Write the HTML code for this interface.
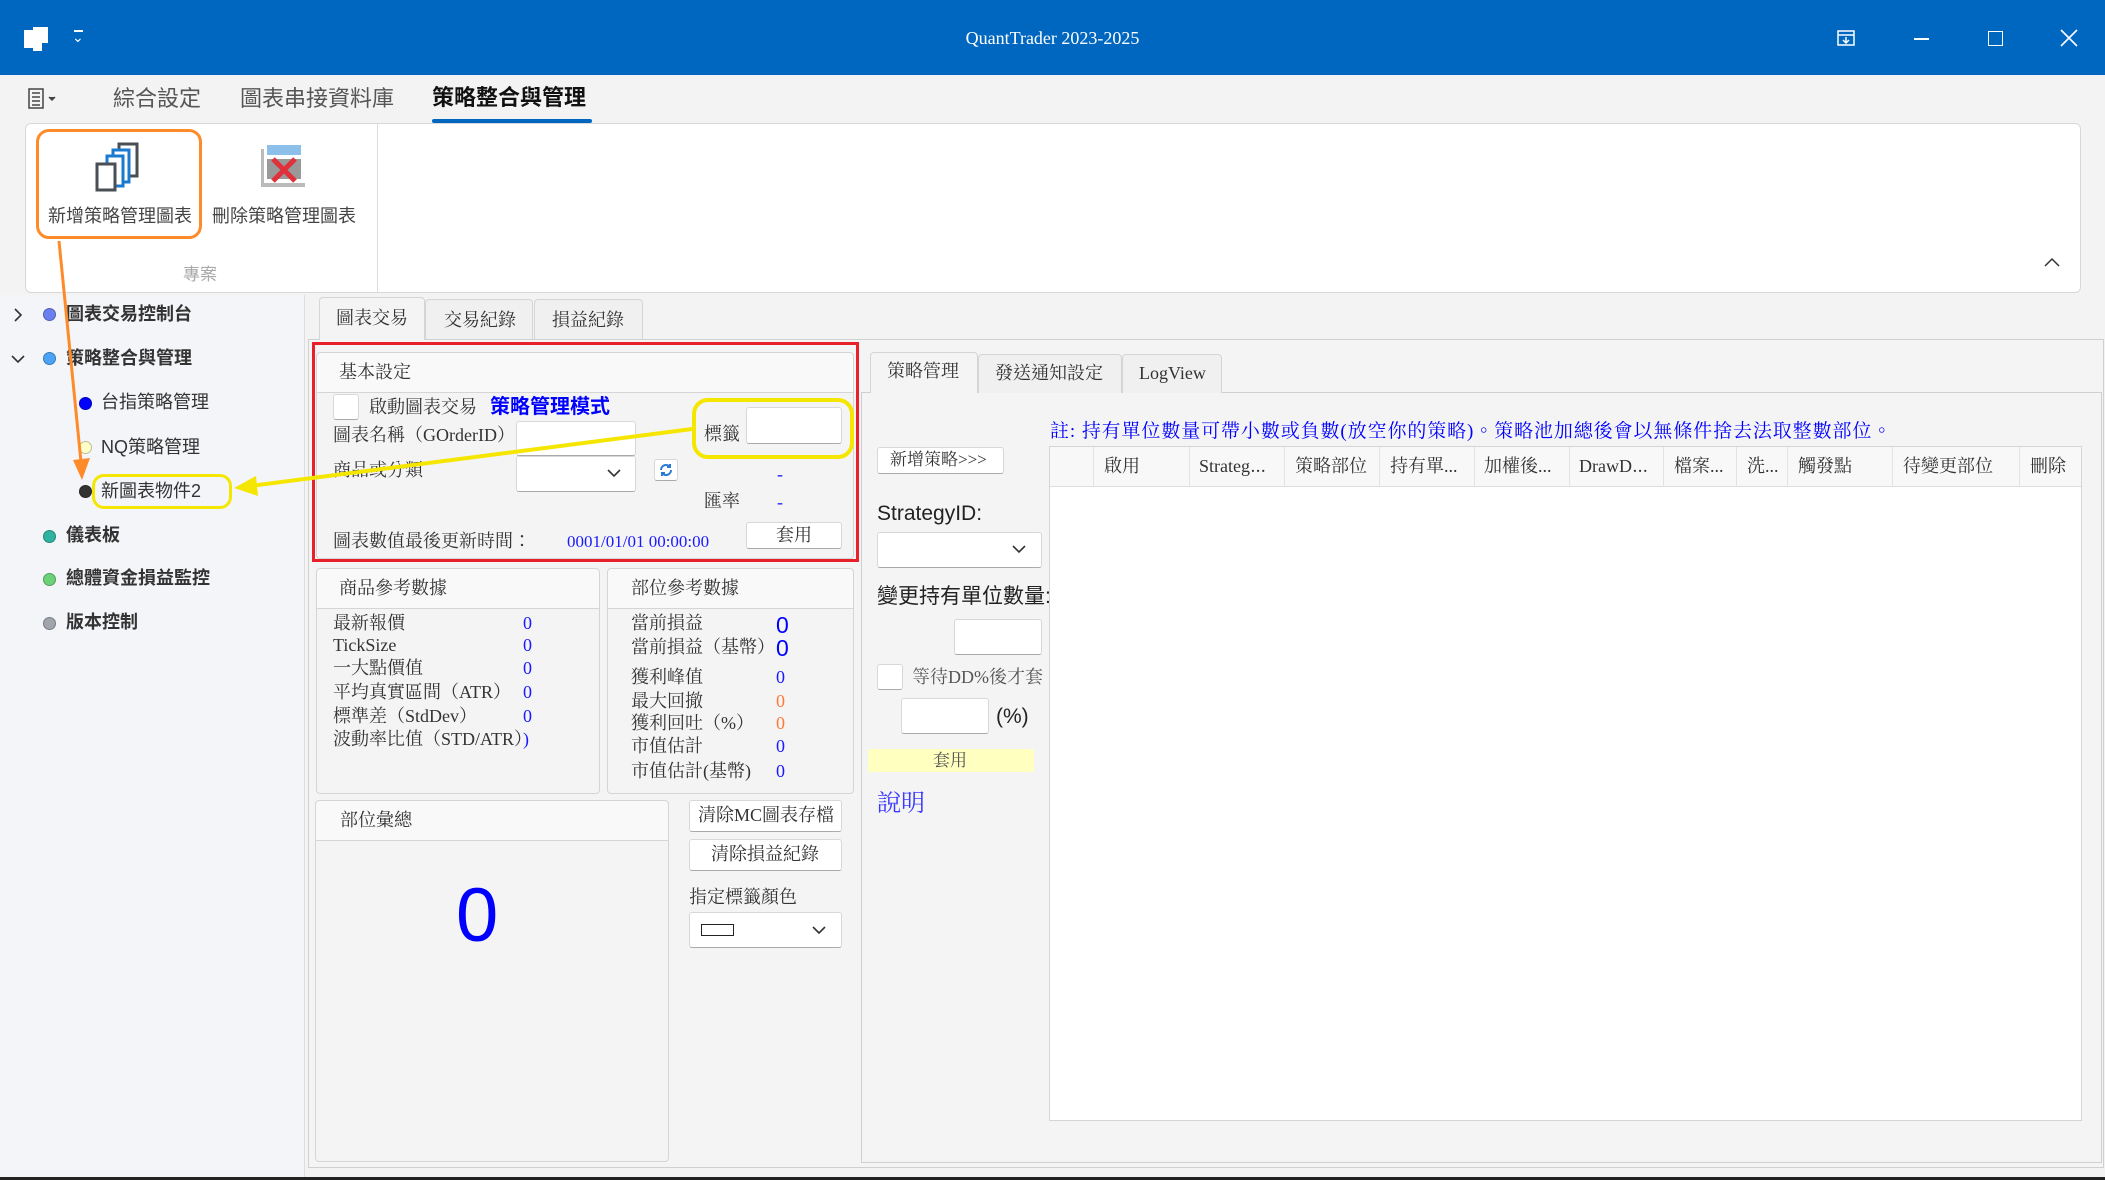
<!DOCTYPE html>
<html><head><meta charset="utf-8">
<style>
*{box-sizing:border-box;margin:0;padding:0}
body{width:2105px;height:1180px;position:relative;overflow:hidden;background:#f3f3f3;font-family:"Liberation Serif","Noto Serif CJK TC",serif;color:#333}
.a{position:absolute}
.t{position:absolute;white-space:nowrap;line-height:1}
.s{font-family:"Liberation Sans","Noto Sans CJK TC",sans-serif}
.box{position:absolute;background:#fff;border:1px solid #d8d8d8;border-radius:3px;border-bottom-color:#aaa}
.grp{position:absolute;border:1px solid #d5d5d5;border-radius:4px;background:#f4f4f4}
.gh{position:absolute;left:0;right:0;top:0;background:#f9f9f9;border-bottom:1px solid #d5d5d5;border-radius:4px 4px 0 0}
.tab{position:absolute;background:#f0f0f0;border:1px solid #d5d5d5;border-bottom:none;border-radius:4px 4px 0 0}
.tab.sel{background:#f4f4f4}
.dot{position:absolute;width:13px;height:13px;border-radius:50%;border:1px solid rgba(0,0,0,.25)}
.v{color:#1a1aff}
.o{color:#ff7a3a}
.hc{position:absolute;top:0;height:40px;border-right:1px solid #e3e3e3}
</style></head><body>

<!-- title bar -->
<div class="a" style="left:0;top:0;width:2105px;height:75px;background:#0067c0"></div>
<div class="a" style="left:24px;top:30px;width:12px;height:18px;background:#fff"></div>
<div class="a" style="left:33px;top:27px;width:15px;height:16px;background:#fff"></div>
<div class="a" style="left:33px;top:43px;width:9px;height:8px;background:#fff"></div>
<div class="t s" style="left:72px;top:30px;color:#fff;font-size:14px">⌄</div>
<div class="a" style="left:74px;top:30px;width:9px;height:1.5px;background:#fff"></div>
<div class="t" style="left:0;width:2105px;text-align:center;top:29px;color:#fff;font-size:18px">QuantTrader 2023-2025</div>
<svg class="a" style="left:1835px;top:28px" width="22" height="20" viewBox="0 0 22 20" fill="none" stroke="#fff" stroke-width="1.5"><rect x="3" y="3" width="16" height="14"/><line x1="3" y1="7" x2="19" y2="7"/><path d="M11 9v6M8 12l3 3 3-3"/></svg>
<div class="a" style="left:1914px;top:38px;width:15px;height:1.5px;background:#fff"></div>
<div class="a" style="left:1988px;top:31px;width:15px;height:15px;border:1.5px solid #fff"></div>
<svg class="a" style="left:2060px;top:29px" width="18" height="18" stroke="#fff" stroke-width="1.6"><path d="M1 1L17 17M17 1L1 17"/></svg>

<!-- menu row -->
<svg class="a" style="left:28px;top:88px" width="32" height="22" fill="none" stroke="#444" stroke-width="1.5"><rect x="1" y="1" width="14" height="19"/><path d="M4 5h8M4 9h8M4 13h8M4 17h8"/><path d="M21 9l3 3 3-3" fill="#444"/></svg>
<div class="t s" style="left:113px;top:88px;font-size:22px;color:#555">綜合設定</div>
<div class="t s" style="left:240px;top:88px;font-size:22px;color:#555">圖表串接資料庫</div>
<div class="t s" style="left:432px;top:87px;font-size:22px;color:#111;font-weight:bold">策略整合與管理</div>
<div class="a" style="left:432px;top:119px;width:160px;height:4px;background:#0067c0;border-radius:2px"></div>

<!-- ribbon -->
<div class="a" style="left:25px;top:123px;width:2056px;height:170px;background:#fff;border:1px solid #d8d8d8;border-radius:6px"></div>
<div class="a" style="left:377px;top:124px;width:1px;height:168px;background:#ddd"></div>
<div class="a" style="left:36px;top:129px;width:166px;height:110px;border:3px solid #ff8a2a;border-radius:13px"></div>
<svg class="a" style="left:95px;top:142px" width="46" height="50" fill="#fff" stroke-width="3">
<rect x="24" y="2" width="18" height="32" stroke="#4a4f55"/>
<rect x="18" y="8" width="16" height="32" stroke="#1a7ad0"/>
<rect x="12" y="14" width="16" height="30" stroke="#1a7ad0"/>
<rect x="2" y="22" width="18" height="26" stroke="#4a4f55"/>
</svg>
<div class="t s" style="left:48px;top:207px;font-size:18px;color:#444">新增策略管理圖表</div>
<svg class="a" style="left:261px;top:145px" width="44" height="44">
<rect x="6" y="0" width="34" height="10" fill="#8cc0ea"/>
<rect x="0" y="4" width="3" height="38" fill="#bbb"/>
<rect x="0" y="38" width="44" height="4" fill="#bbb"/>
<rect x="6" y="14" width="34" height="20" fill="#999"/>
<path d="M12 14l22 22M34 14L12 36" stroke="#e0303a" stroke-width="5"/>
</svg>
<div class="t s" style="left:212px;top:207px;font-size:18px;color:#444">刪除策略管理圖表</div>
<div class="t s" style="left:183px;top:266px;font-size:17px;color:#aaa">專案</div>
<svg class="a" style="left:2044px;top:257px" width="16" height="10" fill="none" stroke="#333" stroke-width="1.5"><path d="M1 9l7-7 7 7"/></svg>

<!-- left tree -->
<div class="a" style="left:0;top:295px;width:305px;height:882px;background:#f4f5f9;border-right:1px solid #ddd"></div>
<svg class="a" style="left:13px;top:307px" width="10" height="16" fill="none" stroke="#333" stroke-width="1.6"><path d="M2 2l6 6-6 6"/></svg>
<svg class="a" style="left:10px;top:354px" width="16" height="10" fill="none" stroke="#333" stroke-width="1.6"><path d="M2 2l6 6 6-6"/></svg>
<div class="dot" style="left:43px;top:308px;background:#6b7ff0"></div>
<div class="t s" style="left:66px;top:305px;font-size:18px;font-weight:bold;color:#333">圖表交易控制台</div>
<div class="dot" style="left:43px;top:352px;background:#4aa3f5"></div>
<div class="t s" style="left:66px;top:349px;font-size:18px;font-weight:bold;color:#333">策略整合與管理</div>
<div class="dot" style="left:79px;top:397px;background:#0000ff"></div>
<div class="t s" style="left:101px;top:393px;font-size:18px;color:#333">台指策略管理</div>
<div class="dot" style="left:79px;top:441px;background:#ffffc8"></div>
<div class="t s" style="left:101px;top:438px;font-size:18px;color:#333">NQ策略管理</div>
<div class="dot" style="left:79px;top:485px;background:#333"></div>
<div class="t s" style="left:101px;top:482px;font-size:18px;color:#333">新圖表物件2</div>
<div class="dot" style="left:43px;top:530px;background:#2fb3a0"></div>
<div class="t s" style="left:66px;top:526px;font-size:18px;font-weight:bold;color:#333">儀表板</div>
<div class="dot" style="left:43px;top:573px;background:#6cd27a"></div>
<div class="t s" style="left:66px;top:569px;font-size:18px;font-weight:bold;color:#333">總體資金損益監控</div>
<div class="dot" style="left:43px;top:617px;background:#a0a4ad"></div>
<div class="t s" style="left:66px;top:613px;font-size:18px;font-weight:bold;color:#333">版本控制</div>

<!-- main tabs -->
<div class="a" style="left:308px;top:339px;width:1796px;height:829px;border:1px solid #d0d0d0;background:#f4f4f4"></div>
<div class="tab sel" style="left:319px;top:297px;width:106px;height:43px"></div>
<div class="tab" style="left:425px;top:299px;width:108px;height:40px"></div>
<div class="tab" style="left:534px;top:299px;width:109px;height:40px"></div>
<div class="t" style="left:336px;top:309px;font-size:18px">圖表交易</div>
<div class="t" style="left:444px;top:311px;font-size:18px">交易紀錄</div>
<div class="t" style="left:552px;top:311px;font-size:18px">損益紀錄</div>

<!-- 基本設定 -->
<div class="grp" style="left:316px;top:352px;width:538px;height:207px"><div class="gh" style="height:40px"></div></div>
<div class="t" style="left:339px;top:363px;font-size:18px">基本設定</div>
<div class="box" style="left:333px;top:394px;width:26px;height:26px"></div>
<div class="t" style="left:369px;top:398px;font-size:18px">啟動圖表交易</div>
<div class="t s" style="left:490px;top:397px;font-size:20px;font-weight:bold;color:#0000ff">策略管理模式</div>
<div class="t" style="left:333px;top:426px;font-size:18px">圖表名稱（GOrderID）</div>
<div class="box" style="left:516px;top:421px;width:120px;height:35px"></div>
<div class="t" style="left:333px;top:461px;font-size:18px">商品或分類</div>
<div class="box" style="left:516px;top:456px;width:120px;height:36px"></div>
<svg class="a" style="left:607px;top:469px" width="14" height="9" fill="none" stroke="#333" stroke-width="1.6"><path d="M1 1l6 6 6-6"/></svg>
<div class="box" style="left:654px;top:459px;width:24px;height:22px"></div>
<svg class="a" style="left:658px;top:462px" width="16" height="16" fill="none" stroke="#2a7ad6" stroke-width="2"><path d="M3 8a5 5 0 0 1 9-3M13 8a5 5 0 0 1-9 3"/><path d="M12 2v3h-3M4 14v-3h3"/></svg>
<div class="t" style="left:704px;top:425px;font-size:18px">標籤</div>
<div class="box" style="left:746px;top:407px;width:96px;height:37px"></div>
<div class="t v" style="left:777px;top:465px;font-size:18px">-</div>
<div class="t" style="left:704px;top:492px;font-size:18px">匯率</div>
<div class="t v" style="left:777px;top:493px;font-size:18px">-</div>
<div class="box" style="left:746px;top:522px;width:96px;height:27px"></div>
<div class="t" style="left:776px;top:526px;font-size:18px">套用</div>
<div class="t" style="left:333px;top:532px;font-size:18px">圖表數值最後更新時間：</div>
<div class="t v" style="left:567px;top:533px;font-size:17px">0001/01/01 00:00:00</div>
<div class="a" style="left:312px;top:342px;width:547px;height:220px;border:3px solid #e8202a"></div>

<!-- 商品參考數據 -->
<div class="grp" style="left:316px;top:568px;width:284px;height:226px"><div class="gh" style="height:40px"></div></div>
<div class="t" style="left:339px;top:579px;font-size:18px">商品參考數據</div>
<div class="t" style="left:333px;top:614px;font-size:18px">最新報價</div>
<div class="t" style="left:333px;top:636px;font-size:18px">TickSize</div>
<div class="t" style="left:333px;top:659px;font-size:18px">一大點價值</div>
<div class="t" style="left:333px;top:683px;font-size:18px">平均真實區間（ATR）</div>
<div class="t" style="left:333px;top:707px;font-size:18px">標準差（StdDev）</div>
<div class="t" style="left:333px;top:730px;font-size:18px">波動率比值（STD/ATR）<span class="v">)</span></div>
<div class="t v" style="left:523px;top:614px;font-size:18px">0</div>
<div class="t v" style="left:523px;top:636px;font-size:18px">0</div>
<div class="t v" style="left:523px;top:659px;font-size:18px">0</div>
<div class="t v" style="left:523px;top:683px;font-size:18px">0</div>
<div class="t v" style="left:523px;top:707px;font-size:18px">0</div>

<!-- 部位參考數據 -->
<div class="grp" style="left:607px;top:568px;width:247px;height:226px"><div class="gh" style="height:40px"></div></div>
<div class="t" style="left:631px;top:579px;font-size:18px">部位參考數據</div>
<div class="t" style="left:631px;top:614px;font-size:18px">當前損益</div>
<div class="t" style="left:631px;top:638px;font-size:18px">當前損益（基幣）</div>
<div class="t" style="left:631px;top:668px;font-size:18px">獲利峰值</div>
<div class="t" style="left:631px;top:692px;font-size:18px">最大回撤</div>
<div class="t" style="left:631px;top:714px;font-size:18px">獲利回吐（%）</div>
<div class="t" style="left:631px;top:737px;font-size:18px">市值估計</div>
<div class="t" style="left:631px;top:762px;font-size:18px">市值估計(基幣)</div>
<div class="t s" style="left:776px;top:614px;font-size:23px;color:#0000ff">0</div>
<div class="t s" style="left:776px;top:637px;font-size:23px;color:#0000ff">0</div>
<div class="t v" style="left:776px;top:668px;font-size:18px">0</div>
<div class="t o" style="left:776px;top:692px;font-size:18px">0</div>
<div class="t o" style="left:776px;top:714px;font-size:18px">0</div>
<div class="t v" style="left:776px;top:737px;font-size:18px">0</div>
<div class="t v" style="left:776px;top:762px;font-size:18px">0</div>

<!-- 部位彙總 -->
<div class="grp" style="left:315px;top:800px;width:354px;height:362px"><div class="gh" style="height:40px"></div></div>
<div class="t" style="left:340px;top:811px;font-size:18px">部位彙總</div>
<div class="t s" style="left:456px;top:878px;font-size:76px;color:#0000ff">0</div>
<div class="box" style="left:689px;top:800px;width:153px;height:32px"></div>
<div class="t" style="left:698px;top:806px;font-size:18px">清除MC圖表存檔</div>
<div class="box" style="left:689px;top:839px;width:153px;height:32px"></div>
<div class="t" style="left:711px;top:845px;font-size:18px">清除損益紀錄</div>
<div class="t" style="left:689px;top:888px;font-size:18px">指定標籤顏色</div>
<div class="box" style="left:689px;top:912px;width:153px;height:36px"></div>
<div class="a" style="left:701px;top:924px;width:33px;height:12px;border:1px solid #222;background:#fff"></div>
<svg class="a" style="left:812px;top:926px" width="14" height="9" fill="none" stroke="#333" stroke-width="1.6"><path d="M1 1l6 6 6-6"/></svg>

<!-- right panel -->
<div class="a" style="left:861px;top:392px;width:1241px;height:771px;border:1px solid #d0d0d0;background:#f4f4f4"></div>
<div class="tab sel" style="left:870px;top:352px;width:108px;height:41px"></div>
<div class="tab" style="left:978px;top:354px;width:144px;height:39px"></div>
<div class="tab" style="left:1122px;top:354px;width:100px;height:39px"></div>
<div class="t" style="left:887px;top:362px;font-size:18px">策略管理</div>
<div class="t" style="left:995px;top:364px;font-size:18px">發送通知設定</div>
<div class="t" style="left:1139px;top:364px;font-size:18px">LogView</div>

<div class="t" style="left:1050px;top:422px;font-size:19px;color:#0000ff;letter-spacing:0.9px">註: 持有單位數量可帶小數或負數(放空你的策略)。策略池加總後會以無條件捨去法取整數部位。</div>
<div class="box" style="left:877px;top:447px;width:127px;height:27px"></div>
<div class="t" style="left:890px;top:451px;font-size:17px">新增策略&gt;&gt;&gt;</div>
<div class="t s" style="left:877px;top:503px;font-size:21px;color:#222">StrategyID:</div>
<div class="box" style="left:877px;top:532px;width:165px;height:36px"></div>
<svg class="a" style="left:1012px;top:545px" width="14" height="9" fill="none" stroke="#333" stroke-width="1.6"><path d="M1 1l6 6 6-6"/></svg>
<div class="t s" style="left:877px;top:586px;font-size:21px;color:#222">變更持有單位數量:</div>
<div class="box" style="left:954px;top:619px;width:88px;height:36px"></div>
<div class="box" style="left:877px;top:664px;width:26px;height:26px"></div>
<div class="t" style="left:912px;top:668px;font-size:18px;color:#555">等待DD%後才套</div>
<div class="box" style="left:901px;top:698px;width:88px;height:36px"></div>
<div class="t s" style="left:996px;top:706px;font-size:21px;color:#222">(%)</div>
<div class="a" style="left:868px;top:749px;width:166px;height:23px;background:#ffffc0;border-radius:2px"></div>
<div class="t" style="left:933px;top:752px;font-size:17px;color:#555">套用</div>
<div class="t" style="left:877px;top:792px;font-size:24px;color:#3a3aff">說明</div>

<!-- grid -->
<div class="a" style="left:1049px;top:446px;width:1033px;height:675px;background:#fff;border:1px solid #d5d5d5"></div>
<div class="a" style="left:1050px;top:447px;width:1031px;height:40px;background:#f8f8f8;border-bottom:1px solid #ddd">
<div class="hc" style="left:0;width:44px"></div>
<div class="hc" style="left:44px;width:96px"></div>
<div class="hc" style="left:140px;width:95px"></div>
<div class="hc" style="left:235px;width:95px"></div>
<div class="hc" style="left:330px;width:95px"></div>
<div class="hc" style="left:425px;width:95px"></div>
<div class="hc" style="left:520px;width:94px"></div>
<div class="hc" style="left:614px;width:73px"></div>
<div class="hc" style="left:687px;width:51px"></div>
<div class="hc" style="left:738px;width:105px"></div>
<div class="hc" style="left:843px;width:127px"></div>
</div>
<div class="t" style="left:1104px;top:457px;font-size:18px">啟用</div>
<div class="t" style="left:1199px;top:457px;font-size:18px">Strateg⋯</div>
<div class="t" style="left:1295px;top:457px;font-size:18px">策略部位</div>
<div class="t" style="left:1390px;top:457px;font-size:18px">持有單...</div>
<div class="t" style="left:1484px;top:457px;font-size:18px">加權後...</div>
<div class="t" style="left:1579px;top:457px;font-size:18px">DrawD⋯</div>
<div class="t" style="left:1674px;top:457px;font-size:18px">檔案...</div>
<div class="t" style="left:1747px;top:457px;font-size:18px">洗...</div>
<div class="t" style="left:1798px;top:457px;font-size:18px">觸發點</div>
<div class="t" style="left:1903px;top:457px;font-size:18px">待變更部位</div>
<div class="t" style="left:2030px;top:457px;font-size:18px">刪除</div>

<!-- yellow boxes and arrows -->
<div class="a" style="left:692px;top:398px;width:162px;height:61px;border:4px solid #f5e600;border-radius:16px"></div>
<div class="a" style="left:92px;top:474px;width:140px;height:35px;border:3px solid #f5e600;border-radius:12px"></div>
<svg class="a" style="left:0;top:0" width="2105" height="1180" fill="none">
<line x1="692" y1="429" x2="250" y2="486" stroke="#f5e600" stroke-width="4"/>
<path d="M234 488l22-12 2 20z" fill="#f5e600"/>
<line x1="59" y1="241" x2="81" y2="462" stroke="#ff8a2a" stroke-width="3"/>
<path d="M82 480l-9-20 17-2z" fill="#ff8a2a"/>
</svg>
<div class="a" style="left:0;top:1177px;width:2105px;height:3px;background:#222"></div>
</body></html>
